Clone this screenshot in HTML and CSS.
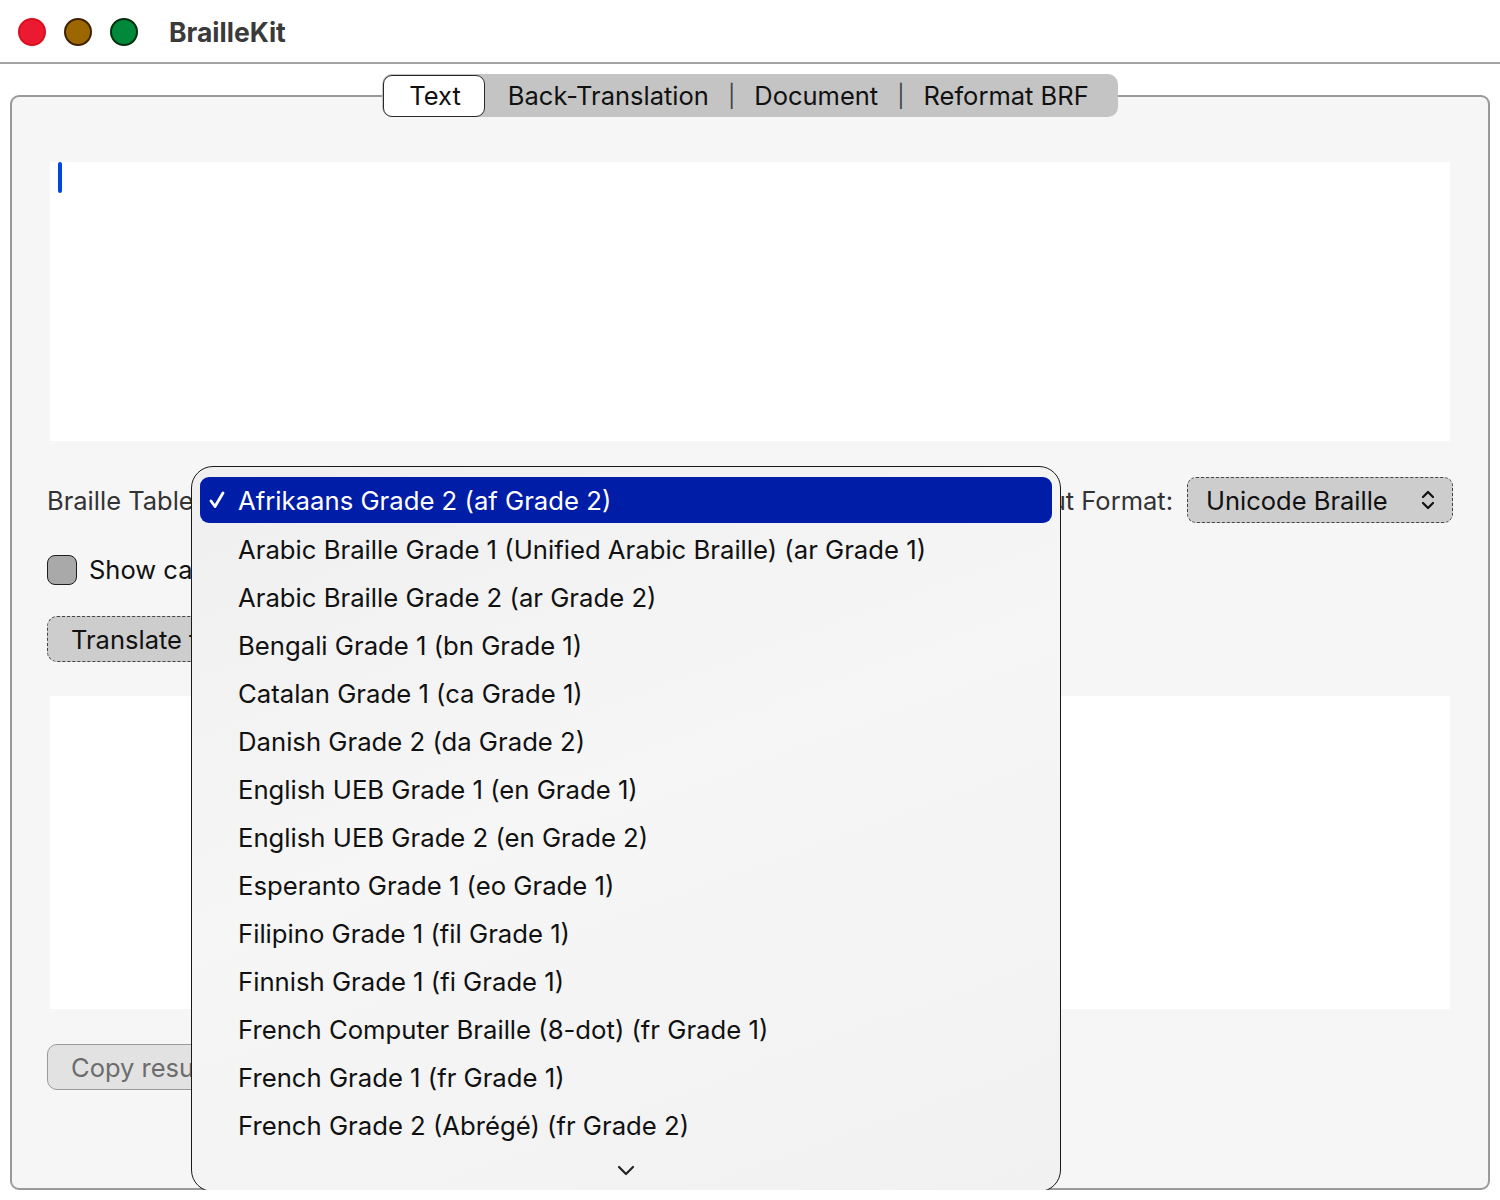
FILE: index.html
```html
<!DOCTYPE html>
<html lang="en">
<head>
    <meta charset="UTF-8">
    <meta name="viewport" content="width=device-width, initial-scale=1.0">
    <title>BrailleKit</title>
    <link rel="stylesheet" href="styles.css">
</head>
<body>
    <div class="titlebar">
        <div class="lights">
            <span class="light red"></span>
            <span class="light yellow"></span>
            <span class="light green"></span>
        </div>
        <div class="app-title">BrailleKit</div>
    </div>

    <div class="main">
        <div class="groupbox">
            <div class="tabs">
                <div class="tab selected">Text</div>
                <div class="tab">Back-Translation</div>
                <span class="sep">|</span>
                <div class="tab">Document</div>
                <span class="sep">|</span>
                <div class="tab">Reformat BRF</div>
            </div>

            <div class="textbox input"><span class="caret"></span></div>

            <div class="options-row">
                <div class="option">
                    <span class="label">Braille Table:</span>
                    <div class="popup table-popup">Afrikaans Grade 2 (af Grade 2)</div>
                </div>
                <div class="option">
                    <span class="label">Output Format:</span>
                    <div class="popup focus">
                        <span>Unicode Braille</span>
                        <svg class="updown" width="16" height="22" viewBox="0 0 16 22">
                            <path d="M3 8 L8 3 L13 8 M3 14 L8 19 L13 14" fill="none" stroke="#111" stroke-width="2.2" stroke-linecap="round" stroke-linejoin="round"/>
                        </svg>
                    </div>
                </div>
            </div>

            <div class="check-row">
                <span class="checkbox"></span>
                <span class="label dark">Show capital indicators</span>
            </div>

            <div class="btn focus translate">Translate to Braille</div>

            <div class="textbox output"></div>

            <div class="btn disabled">Copy result</div>

            <div class="menu">
                <div class="menu-item active">
                    <svg class="check" width="16" height="18" viewBox="0 0 16 18">
                        <path d="M2 10 L6 15.5 L14 2" fill="none" stroke="#fff" stroke-width="2.8" stroke-linecap="round" stroke-linejoin="round"/>
                    </svg>
                    Afrikaans Grade 2 (af Grade 2)
                </div>
                <div class="menu-item">Arabic Braille Grade 1 (Unified Arabic Braille) (ar Grade 1)</div>
                <div class="menu-item">Arabic Braille Grade 2 (ar Grade 2)</div>
                <div class="menu-item">Bengali Grade 1 (bn Grade 1)</div>
                <div class="menu-item">Catalan Grade 1 (ca Grade 1)</div>
                <div class="menu-item">Danish Grade 2 (da Grade 2)</div>
                <div class="menu-item">English UEB Grade 1 (en Grade 1)</div>
                <div class="menu-item">English UEB Grade 2 (en Grade 2)</div>
                <div class="menu-item">Esperanto Grade 1 (eo Grade 1)</div>
                <div class="menu-item">Filipino Grade 1 (fil Grade 1)</div>
                <div class="menu-item">Finnish Grade 1 (fi Grade 1)</div>
                <div class="menu-item">French Computer Braille (8-dot) (fr Grade 1)</div>
                <div class="menu-item">French Grade 1 (fr Grade 1)</div>
                <div class="menu-item">French Grade 2 (Abrégé) (fr Grade 2)</div>
                <div class="menu-more">
                    <svg width="20" height="12" viewBox="0 0 20 12">
                        <path d="M3 2 L10 9 L17 2" fill="none" stroke="#222" stroke-width="2.2" stroke-linecap="round" stroke-linejoin="round"/>
                    </svg>
                </div>
            </div>
        </div>
    </div>
</body>
</html>
```

FILE: styles.css
```css
body {
    margin: 0;
    background: white;
    font-family: Inter, "Noto Sans", sans-serif;
    color: #111;
}
.titlebar {
    box-sizing: border-box;
    height: 64px;
    padding-top: 2px;
    display: flex;
    align-items: center;
    border-bottom: 2px solid #a4a4a4;
}
.lights {
    display: flex;
    gap: 18px;
    margin-left: 18px;
}
.light {
    width: 24px;
    height: 24px;
    border-radius: 50%;
    border: 2px solid;
}
.red {
    background: #ec1a30;
    border-color: #d8101f;
}
.yellow {
    background: #9c6600;
    border-color: #3f2100;
}
.green {
    background: #00893a;
    border-color: #00300e;
}
.app-title {
    margin-left: 31px;
    font-size: 26.5px;
    font-weight: 700;
    color: #3a3a3a;
}
.main {
    padding: 31px 10px 0;
}
.groupbox {
    position: relative;
    height: 1091px;
    border: 2px solid #9a9a9a;
    border-radius: 9px;
    background: #f6f6f6;
    padding: 0 35px;
}
.tabs {
    display: flex;
    align-items: center;
    width: fit-content;
    height: 43px;
    margin: -23px auto 0;
    background: #c4c4c4;
    border-radius: 10px;
    font-size: 25.5px;
    padding-right: 10px;
}
.tab {
    padding: 0 19px;
}
.tab.selected {
    height: 40px;
    line-height: 40px;
    padding: 0 23px 0 25px;
    margin-left: 1px;
    margin-right: 4px;
    background: white;
    border: 1.5px solid #2a2a2a;
    border-radius: 9px;
}
.sep {
    color: #444;
    font-size: 22px;
}
.textbox {
    background: white;
    margin: 0 3px;
}
.input {
    height: 279px;
    margin-top: 45px;
    padding: 0 8px;
}
.caret {
    display: block;
    width: 4px;
    height: 31px;
    border-radius: 2px;
    background: #0047e0;
}
.options-row {
    display: flex;
    justify-content: space-between;
    align-items: center;
    margin-top: 36px;
}
.option {
    display: flex;
    align-items: center;
    gap: 14px;
}
.label {
    font-size: 25.5px;
    color: #333;
}
.label.dark {
    color: #111;
}
.popup {
    display: flex;
    align-items: center;
    justify-content: space-between;
    box-sizing: border-box;
    height: 46px;
    width: 266px;
    padding: 0 18px;
    font-size: 25.5px;
    background: #cdcdcd;
    border-radius: 9px;
}
.focus {
    border: 1.5px dashed #444;
}
.table-popup {
    width: 500px;
}
.updown {
    margin-right: -2px;
}
.check-row {
    display: flex;
    align-items: center;
    gap: 12px;
    margin-top: 31px;
}
.checkbox {
    width: 28px;
    height: 28px;
    background: #a9a9a9;
    border: 1.5px solid #1e1e1e;
    border-radius: 8px;
}
.btn {
    display: inline-flex;
    align-items: center;
    box-sizing: border-box;
    height: 46px;
    padding: 0 23px;
    font-size: 25.5px;
    border-radius: 10px;
}
.translate {
    margin-top: 31px;
    background: #cdcdcd;
}
.output {
    height: 313px;
    margin-top: 34px;
}
.disabled {
    margin-top: 35px;
    background: #e2e2e2;
    border: 1.5px solid #9b9b9b;
    color: #6c6c6c;
}
.menu {
    position: absolute;
    left: 179px;
    top: 369px;
    width: 870px;
    height: 726px;
    box-sizing: border-box;
    padding: 10px 8px 0;
    border: 1.5px solid #1a1a1a;
    border-radius: 22px;
    background: linear-gradient(160deg, #efefef 0%, #f6f6f6 45%, #f1f1f1 100%);
}
.menu-item {
    display: flex;
    align-items: center;
    height: 48px;
    padding-left: 38px;
    font-size: 25.7px;
    color: #111;
    white-space: nowrap;
}
.menu-item.active {
    position: relative;
    height: 46px;
    margin-bottom: 2px;
    background: #001da8;
    color: white;
    border-radius: 9px;
}
.check {
    position: absolute;
    left: 9px;
    top: 14px;
}
.menu-more {
    display: flex;
    justify-content: center;
    padding-top: 16px;
}
```
